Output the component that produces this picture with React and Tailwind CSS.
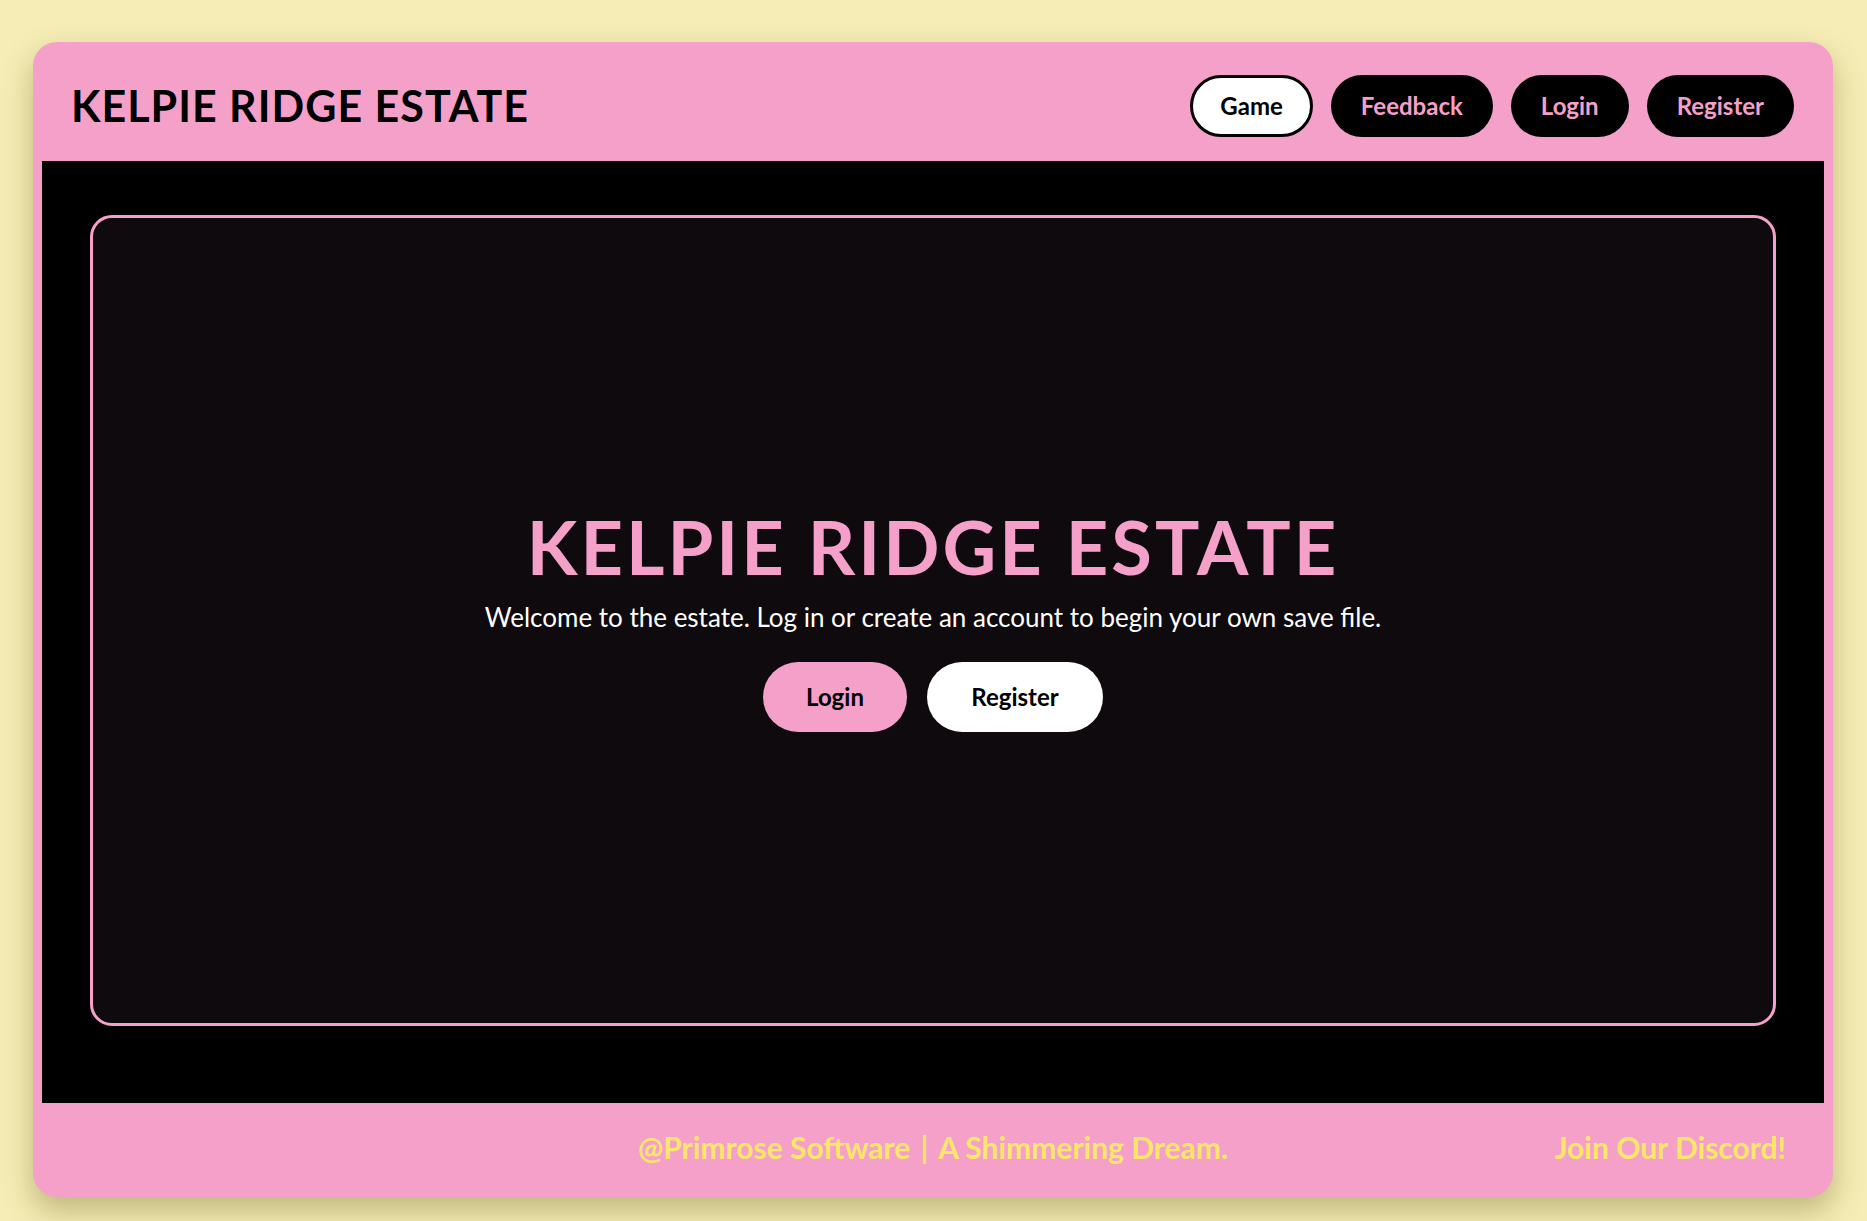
import React from 'react';

const font = { fontFamily: '"Lato", "Noto Sans", sans-serif' };

const NavButton = ({ label, active }) => (
  <button
    className={
      active
        ? 'h-[62px] px-[27px] rounded-full bg-white border-[3px] border-black text-black text-[24px] font-bold'
        : 'h-[62px] px-[30px] rounded-full bg-black text-[#f4a0c8] text-[24px] font-bold'
    }
  >
    {label}
  </button>
);

const App = () => {
  return (
    <div className="min-h-screen bg-[#f5edb5] px-[33px] pt-[42px] pb-[24px]" style={font}>
      <div className="w-[1800px] rounded-[24px] bg-[#f4a0c8] overflow-hidden shadow-[0_14px_30px_rgba(90,80,20,0.35)]">
        {/* header */}
        <div className="h-[119px] flex items-center justify-between pl-[38px] pr-[39px] pt-[8px]">
          <h1 className="text-[43px] font-bold tracking-[1px] text-black leading-none">KELPIE RIDGE ESTATE</h1>
          <div className="flex items-center gap-[18px]">
            <NavButton label="Game" active />
            <NavButton label="Feedback" />
            <NavButton label="Login" />
            <NavButton label="Register" />
          </div>
        </div>

        {/* main */}
        <div className="mx-[9px] h-[942px] bg-black px-[48px] pt-[54px]">
          <div className="h-[811px] rounded-[22px] border-[3px] border-[#f4a0c8] bg-[#0e0a0e] flex flex-col items-center justify-center">
            <h2 className="text-[74px] font-bold tracking-[3px] text-[#f4a0c8] leading-none">KELPIE RIDGE ESTATE</h2>
            <p className="mt-[14px] text-[26px] text-white">
              Welcome to the estate. Log in or create an account to begin your own save file.
            </p>
            <div className="mt-[25px] flex items-center gap-[20px]">
              <button className="h-[70px] w-[144px] rounded-full bg-[#f4a0c8] text-black text-[24px] font-bold">Login</button>
              <button className="h-[70px] w-[176px] rounded-full bg-white text-black text-[24px] font-bold">Register</button>
            </div>
          </div>
        </div>

        {/* footer */}
        <div className="h-[94px] pb-[6px] grid grid-cols-[1fr_auto_1fr] items-center text-[30px] font-bold text-[#fce76c]">
          <div />
          <p>
            @Primrose Software<span className="mx-[10px]">|</span>A Shimmering Dream.
          </p>
          <p className="text-right pr-[47px]">Join Our Discord!</p>
        </div>
      </div>
    </div>
  );
};

export default App;
